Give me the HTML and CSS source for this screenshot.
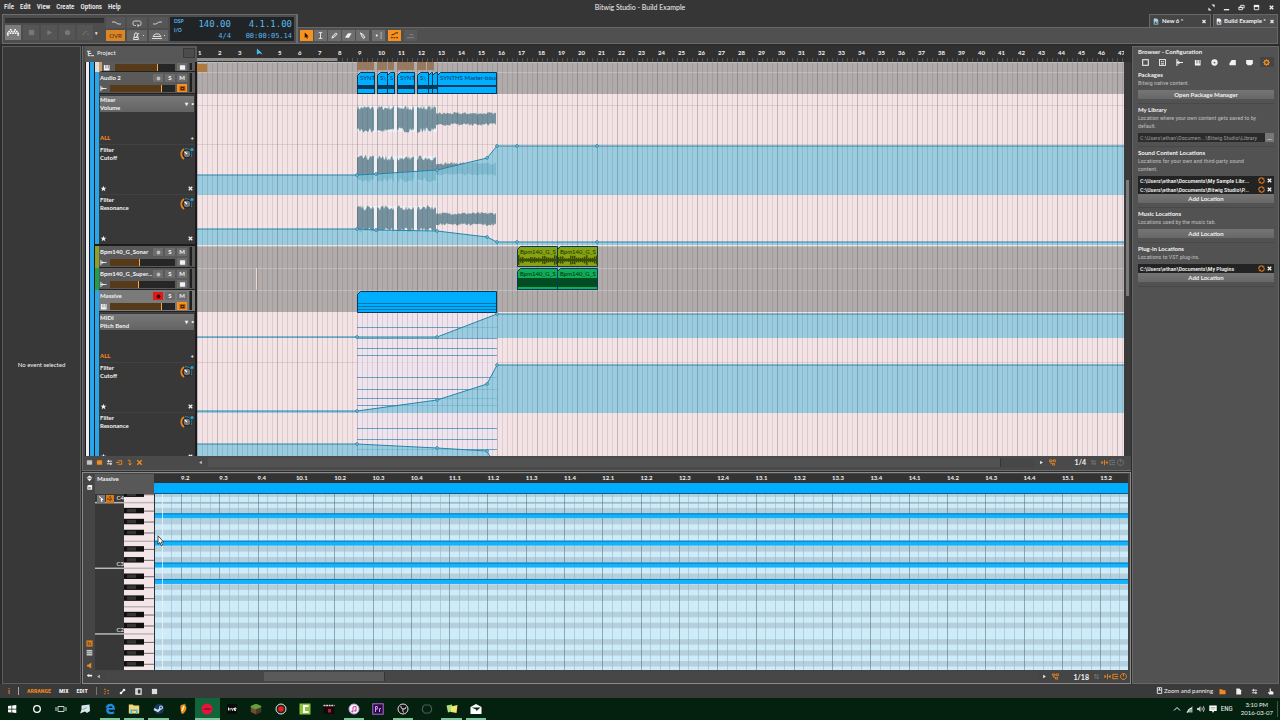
FILE: index.html
```
<!DOCTYPE html>
<html lang="en">
<head>
<meta charset="utf-8">
<title>Bitwig Studio - Build Example</title>
<link rel="stylesheet" href="styles.css">
</head>
<body>
<svg class="defs" aria-hidden="true">
  <symbol id="i-close" viewBox="0 0 8 8"><path d="M2 2l4 4M6 2l-4 4" stroke="currentColor" stroke-width="1.500"/></symbol>
  <symbol id="i-doc" viewBox="0 0 8 8"><path d="M1 0h4l2 2v6H1z" fill="currentColor"/><path d="M2 7V5h1V4h1v2h1V4h1v3z" fill="#444"/></symbol>
  <symbol id="i-audio" viewBox="0 0 8 8"><path d="M1 1v6M2.500 2.500v3M4 3.500v1M1 4h6.500" stroke="currentColor" fill="none"/></symbol>
  <symbol id="i-keys" viewBox="0 0 8 8"><path d="M1 1h1.500v4H3V1h1.200v4h.6V1H6v4h.6V1H7.500v6.500H1z" fill="currentColor"/></symbol>
  <symbol id="i-dot" viewBox="0 0 8 8"><circle cx="4" cy="4" r="2.200" fill="currentColor"/></symbol>
  <symbol id="i-screen" viewBox="0 0 8 8"><rect x="1" y="1.500" width="6" height="5" rx=".5" fill="currentColor"/></symbol>
  <symbol id="i-ring" viewBox="0 0 8 8"><rect x=".7" y="1.200" width="6.600" height="5.600" fill="#b0560c"/><rect x="2.500" y="3" width="3" height="2" fill="#f7921e" stroke="#2a1600"/></symbol>
  <symbol id="i-star" viewBox="0 0 8 8"><path d="M4 .8l.9 2.200 2.400.1-1.900 1.500.7 2.400L4 5.700 1.900 7l.7-2.400L.7 3.100l2.400-.1z" fill="currentColor"/></symbol>
  <symbol id="i-knob" viewBox="0 0 14 14"><path d="M4 12A6 6 0 0 1 4 2" stroke="#e8841c" stroke-width="1.800" fill="none"/><path d="M5 1.700A6 6 0 0 1 11 10" stroke="#2b7fa8" stroke-width="1.200" fill="none"/><circle cx="7" cy="7" r="4" fill="#757575" stroke="#1d1d1d"/><path d="M7 7L4.600 4.600" stroke="#fff" stroke-width="1.200"/><circle cx="12" cy="2.500" r="1.600" fill="#1ea4dc"/></symbol>
  <symbol id="i-refresh" viewBox="0 0 8 8"><path d="M1.300 5A2.800 2.800 0 0 1 6 2M6.700 3A2.800 2.800 0 0 1 2 6" stroke="#e07a24" stroke-width="1.200" fill="none"/><path d="M4.500 2.800H7V.5zM3.500 5.200H1v2.300z" fill="#e07a24"/></symbol>
  <symbol id="i-tree" viewBox="0 0 8 8"><path d="M.5 1h2.500v2H.5zM5 1h2.500v2H5zM3 2h2M2 3v2h2M4 5h2.500v2H4z" stroke="currentColor" stroke-width=".9" fill="none"/></symbol>
  <symbol id="i-snap" viewBox="0 0 8 8"><path d="M4 1v6" stroke="currentColor"/><path d="M.5 2v4L3 4zM7.500 2v4L5 4z" fill="currentColor"/></symbol>
  <symbol id="i-lines" viewBox="0 0 8 8"><path d="M1 1v6M1 1.500h6M3 4h4M1 6.500h6" stroke="currentColor" fill="none"/></symbol>
  <symbol id="i-clock" viewBox="0 0 8 8"><path d="M2.500.8h3L7.200 2.500v3L5.500 7.200h-3L.8 5.500v-3zM4 1v3" stroke="currentColor" fill="none"/></symbol>
  <symbol id="i-swap" viewBox="0 0 8 8"><path d="M1 2.500h6M1 5.500h6M3 1v3M5.500 4v3" stroke="currentColor" fill="none"/></symbol>
  <symbol id="i-left" viewBox="0 0 8 8"><path d="M5.500 2v4L2.500 4z" fill="currentColor"/></symbol>
  <symbol id="i-right" viewBox="0 0 8 8"><path d="M2.500 2v4l3-2z" fill="currentColor"/></symbol>
  <symbol id="i-pointer" viewBox="0 0 8 8"><path d="M2 .5v6.300l1.500-1.500 1 2.400 1-.5-1-2.200h2z" fill="currentColor"/></symbol>
</svg>

<div class="app">
  <header class="top">
    <nav class="menu">
      <button>File</button><button>Edit</button><button>View</button><button>Create</button><button>Options</button><button>Help</button>
    </nav>
    <h1 class="title">Bitwig Studio - Build Example</h1>
    <div class="window-controls">
      <button aria-label="Full screen"><svg class="ic" viewBox="0 0 8 8"><path d="M4 .5h3.500V4zM4 7.500H.5V4z" fill="currentColor"/></svg></button>
      <button aria-label="Minimize"><svg class="ic" viewBox="0 0 8 8"><path d="M1 6.500h6" stroke="currentColor" stroke-width="1.500"/></svg></button>
      <button aria-label="Restore"><svg class="ic" viewBox="0 0 8 8"><path d="M3 3V1.500h4v3H5.500M1 3.500h4v3H1zM1 4h4" stroke="currentColor" fill="none"/></svg></button>
      <button aria-label="Maximize"><svg class="ic" viewBox="0 0 8 8"><path d="M1.500 2v4.500h5V2z" stroke="currentColor" fill="none"/><path d="M1 1h6v2.500H1z" fill="currentColor"/></svg></button>
      <button aria-label="Close"><svg class="ic"><use href="#i-close"/></svg></button>
    </div>
  </header>

  <section class="bar">
    <div class="transport">
      <div class="transport-left">
        <div class="progress"></div>
        <div class="transport-row">
          <button class="logo" aria-label="Dashboard"><svg viewBox="0 0 14 8"><g fill="#fff"><rect x="3.500" y="0" width="2" height="1.700"/><rect x="8.500" y="0" width="2" height="1.700"/><rect x="1.500" y="2" width="2" height="1.700"/><rect x="4.500" y="2" width="2" height="1.700"/><rect x="7.500" y="2" width="2" height="1.700"/><rect x="10.500" y="2" width="2" height="1.700"/><rect x="0" y="4" width="2" height="1.700"/><rect x="3" y="4" width="2" height="1.700"/><rect x="6" y="4" width="2" height="1.700"/><rect x="9" y="4" width="2" height="1.700"/><rect x="12" y="4" width="2" height="1.700"/><rect x="0" y="6" width="2" height="1.700"/><rect x="12" y="6" width="2" height="1.700"/></g></svg></button>
          <button aria-label="Stop"><svg class="ic" viewBox="0 0 8 8"><rect x="1" y="1" width="6" height="6" fill="currentColor"/></svg></button>
          <button aria-label="Play"><svg class="ic" viewBox="0 0 8 8"><path d="M1.500 1v6L7 4z" fill="currentColor"/></svg></button>
          <button aria-label="Record"><svg class="ic" viewBox="0 0 8 8"><circle cx="4" cy="4" r="3" fill="currentColor"/></svg></button>
          <button aria-label="Automation record"><svg class="ic" viewBox="0 0 8 8"><path d="M0 6h2l2-3h2M6 6h2" stroke="currentColor" fill="none"/></svg></button>
          <span class="caret">▾</span>
        </div>
      </div>
      <div class="modes">
        <button class="mode" aria-label="Punch in"><svg class="wide" viewBox="0 0 12 8"><path d="M2 3l3 0 3 2h3" stroke="#ccc" fill="none"/></svg></button>
        <button class="mode" aria-label="Loop"><svg class="wide" viewBox="0 0 12 8"><path d="M5 6.500H3.500a1.500 1.500 0 0 1-1.500-1.500V3.500A1.500 1.500 0 0 1 3.500 2h5A1.500 1.500 0 0 1 10 3.500V5a1.500 1.500 0 0 1-1.500 1.500H7M7 5v3" stroke="#ccc" fill="none"/></svg></button>
        <button class="mode" aria-label="Punch out"><svg class="wide" viewBox="0 0 12 8"><path d="M1 5h3l3-2h3" stroke="#ccc" fill="none"/></svg></button>
        <button class="mode on">OVR</button>
        <button class="mode lit" aria-label="Metronome"><svg class="wide" viewBox="0 0 12 8"><path d="M5 1h2l1.500 6.500h-5zM4 5.500h4M6 5l3-4" stroke="#ddd" fill="none"/></svg><i></i></button>
        <button class="mode lit" aria-label="Groove"><svg class="wide" viewBox="0 0 12 8"><path d="M1 6.500h10M2 4.500h8L8 2H4z" stroke="#ddd" fill="none"/></svg><i></i></button>
      </div>
      <div class="lcd">
        <div class="lcd-flags"><span>DSP</span><span>I/O</span></div>
        <div class="lcd-col"><b>140.00</b><span>4/4</span></div>
        <div class="lcd-col"><b>4.1.1.00</b><span>00:00:05.14</span></div>
      </div>
    </div>
    <div class="bar-right">
      <div class="tabs">
        <div class="tab"><svg class="ic sky"><use href="#i-doc"/></svg><span>New 6 *</span><button aria-label="Close New 6"><svg class="ic"><use href="#i-close"/></svg></button></div>
        <div class="tab active"><svg class="ic"><use href="#i-doc"/></svg><span>Build Example *</span><button aria-label="Close Build Example"><svg class="ic"><use href="#i-close"/></svg></button></div>
      </div>
      <div class="tools">
        <button class="tool on" aria-label="Pointer"><svg class="ic"><use href="#i-pointer"/></svg></button>
        <button class="tool" aria-label="Time selection"><svg class="ic" viewBox="0 0 8 8"><path d="M2 .7h4M2 7.300h4M4 1v6" stroke="currentColor"/></svg></button>
        <button class="tool" aria-label="Pen"><svg class="ic" viewBox="0 0 8 8"><path d="M1 7l1-2.500L5.500 1 7 2.500 3.500 6z" stroke="currentColor" fill="#999"/></svg></button>
        <button class="tool" aria-label="Eraser"><svg class="ic" viewBox="0 0 8 8"><path d="M.5 5.500L3.500 1.500h4L4.500 6.500h-4z" fill="currentColor"/></svg></button>
        <button class="tool" aria-label="Knife"><svg class="ic" viewBox="0 0 8 8"><path d="M1.500 1L5 3l1.500 3-1 1.500-2-2z" fill="#999" stroke="currentColor"/></svg></button>
        <button class="tool spaced" aria-label="Follow playback"><svg class="ic" viewBox="0 0 8 8"><circle cx="2" cy="4" r="1.200" fill="currentColor"/><path d="M7 0v8" stroke="#bbb"/></svg></button>
        <button class="tool spaced on" aria-label="Automation write"><svg class="ic" viewBox="0 0 8 8"><path d="M0 6.500h2M3 6.500h2M6 6.500h2M.5 3.500l3-1 2-1.500H8" stroke="currentColor" fill="none"/></svg></button>
        <button class="tool spaced faint" aria-label="Layered editing"><svg class="ic" viewBox="0 0 8 8"><path d="M0 6.500h8M3 3h4" stroke="currentColor" fill="none"/></svg></button>
      </div>
    </div>
  </section>

  <main class="work">
    <aside class="inspector"><p>No event selected</p></aside>

    <div class="center">
      <section class="arranger">
        <div class="project"><svg class="ic" viewBox="0 0 8 8"><path d="M0 1.500h4M1.500 2v4.500H4M2 4h3M4.500 6.500H8" stroke="#fff" fill="none"/></svg><span>Project</span><span class="grid-box"></span></div>
        <div class="ruler" id="ruler"></div>
        <div class="corner"></div>

        <div class="tracks">
          <div class="strip white"></div><div class="strip blue"></div>
          <div class="track-list">
            <div class="group none">
              <div class="track folded">
                <svg class="ic"><use href="#i-keys"/></svg>
                <input type="range" class="fader" aria-label="Volume" value="71" style="--v:71%">
                <button class="btn" aria-label="Show lanes"><svg class="ic"><use href="#i-screen"/></svg></button><span class="meter"></span>
              </div>
            </div>
            <div class="group blue open">
              <div class="track">
                <span class="name">Audio 2</span>
                <button class="btn" aria-label="Record"><svg class="ic dim"><use href="#i-dot"/></svg></button><button class="btn">S</button><button class="btn">M</button>
                <svg class="ic"><use href="#i-audio"/></svg><input type="range" class="fader" aria-label="Audio 2 volume" value="79" style="--v:79%"><button class="btn hot" aria-label="Automation"><svg class="ic"><use href="#i-ring"/></svg></button><span class="meter"></span>
              </div>
              <div class="lane">
                <button class="picker"><span>Mixer<br>Volume</span><i>▾</i><i>▪</i></button>
                <div class="lane-foot"><b class="all">ALL</b><span>+</span></div>
              </div>
              <div class="lane"><div class="lane-name"><span>Filter<br>Cutoff</span><svg class="knob"><use href="#i-knob"/></svg></div>
                <div class="lane-foot"><svg class="ic"><use href="#i-star"/></svg><svg class="ic"><use href="#i-close"/></svg></div></div>
              <div class="lane"><div class="lane-name"><span>Filter<br>Resonance</span><svg class="knob"><use href="#i-knob"/></svg></div>
                <div class="lane-foot"><svg class="ic"><use href="#i-star"/></svg><svg class="ic"><use href="#i-close"/></svg></div></div>
            </div>
            <div class="group olive">
              <div class="track">
                <span class="name">Bpm140_G_Sonar</span>
                <button class="btn" aria-label="Record"><svg class="ic dim"><use href="#i-dot"/></svg></button><button class="btn">S</button><button class="btn">M</button>
                <svg class="ic"><use href="#i-audio"/></svg><input type="range" class="fader" aria-label="Sonar volume" value="45" style="--v:45%"><button class="btn" aria-label="Automation"><svg class="ic"><use href="#i-screen"/></svg></button><span class="meter"></span>
              </div>
            </div>
            <div class="group green">
              <div class="track">
                <span class="name">Bpm140_G_Super...</span>
                <button class="btn" aria-label="Record"><svg class="ic dim"><use href="#i-dot"/></svg></button><button class="btn">S</button><button class="btn">M</button>
                <svg class="ic"><use href="#i-audio"/></svg><input type="range" class="fader" aria-label="Super volume" value="44" style="--v:44%"><button class="btn" aria-label="Automation"><svg class="ic"><use href="#i-screen"/></svg></button><span class="meter"></span>
              </div>
            </div>
            <div class="group blue">
              <div class="track selected">
                <span class="name">Massive</span>
                <button class="btn armed" aria-label="Record"><svg class="ic"><use href="#i-dot"/></svg></button><button class="btn">S</button><button class="btn">M</button>
                <svg class="ic"><use href="#i-keys"/></svg><input type="range" class="fader" aria-label="Massive volume" value="79" style="--v:79%"><button class="btn hot" aria-label="Automation"><svg class="ic"><use href="#i-ring"/></svg></button><span class="meter"></span>
              </div>
              <div class="lane">
                <button class="picker"><span>MIDI<br>Pitch Bend</span><i>▾</i><i>▪</i></button>
                <div class="lane-foot"><b class="all">ALL</b><span>+</span></div>
              </div>
              <div class="lane"><div class="lane-name"><span>Filter<br>Cutoff</span><svg class="knob"><use href="#i-knob"/></svg></div>
                <div class="lane-foot"><svg class="ic"><use href="#i-star"/></svg><svg class="ic"><use href="#i-close"/></svg></div></div>
              <div class="lane"><div class="lane-name"><span>Filter<br>Resonance</span><svg class="knob"><use href="#i-knob"/></svg></div>
                <div class="lane-foot"><svg class="ic"><use href="#i-star"/></svg><svg class="ic"><use href="#i-close"/></svg></div></div>
            </div>
          </div>
        </div>
        <div class="timeline"><svg id="timeline"></svg></div>
        <div class="vscroll"><div></div></div>

        <div class="foot-tools">
          <button aria-label="Clips"><svg class="ic grey"><use href="#i-screen"/></svg></button>
          <button class="orange" aria-label="Tracks"><svg class="ic"><use href="#i-screen"/></svg></button>
          <button aria-label="I/O"><svg class="ic"><use href="#i-swap"/></svg></button>
          <button class="orange" aria-label="Sends"><svg class="ic" viewBox="0 0 8 8"><path d="M0 4h4M2 2h5M2 6h5M6.500 2v4" stroke="currentColor" fill="none"/></svg></button>
          <button class="orange" aria-label="Effects"><svg class="ic" viewBox="0 0 8 8"><path d="M2 1.500h2.500v5M3 5l1.500 2L6.500 5" stroke="currentColor" fill="none"/></svg></button>
          <button class="orange" aria-label="Deactivated"><svg class="ic" viewBox="0 0 8 8"><path d="M1.500 1.500l5 5M6.500 1.500l-5 5" stroke="currentColor" stroke-width="1.600"/></svg></button>
        </div>
        <div class="hscroll">
          <button aria-label="Scroll left"><svg class="ic grey"><use href="#i-left"/></svg></button>
          <div class="rail"><div class="thumb long"></div></div>
          <button aria-label="Scroll right"><svg class="ic"><use href="#i-right"/></svg></button>
          <svg class="ic orange"><use href="#i-tree"/></svg><span class="snap">1/4</span><svg class="ic faded"><use href="#i-swap"/></svg>
          <span class="trio"><svg class="ic orange"><use href="#i-snap"/></svg><svg class="ic faded"><use href="#i-lines"/></svg><svg class="ic faded"><use href="#i-clock"/></svg></span>
        </div>
      </section>

      <section class="editor">
        <div class="editor-side">
          <svg class="ic" viewBox="0 0 8 8"><path d="M4 .5L7.500 3H.5zM1 4h6L4 7z" fill="currentColor"/></svg>
          <svg class="ic" viewBox="0 0 8 8"><path d="M1.500 2L3 1h4v5.500H1.500z" fill="currentColor"/><path d="M2.500 4.500h3" stroke="#444"/></svg>
          <span class="spring"></span>
          <svg class="ic" viewBox="0 0 8 8"><rect x=".5" y=".5" width="7" height="7" fill="#e8841c"/><path d="M2.500 2v4M4 3.500h2M4 5.500h2" stroke="#333"/></svg>
          <svg class="ic grey" viewBox="0 0 8 8"><rect x=".8" y="1" width="6.400" height="6.500" fill="currentColor"/><path d="M1 3h6M1 5h6" stroke="#888"/></svg>
          <svg class="ic orange tail" viewBox="0 0 8 8"><path d="M1 3h1.500L6 .5v7L2.500 5H1z" fill="currentColor"/></svg>
          <svg class="ic" viewBox="0 0 8 8"><path d="M1 4l2-2v4zM3 3h4v2H3z" fill="currentColor"/></svg>
        </div>
        <div class="editor-name">Massive</div>
        <div class="editor-ruler" id="editorRuler"></div>
        <div class="keys"><svg id="keys"></svg></div>
        <div class="notes"><svg id="notes"></svg>
          <svg class="cursor" viewBox="0 0 8 12"><path d="M1 .8v8.400l1.900-1.700 1.400 3.200 1.400-.6-1.400-3.100h2.400z" fill="#fff" stroke="#222" stroke-width=".8"/></svg>
        </div>
        <div class="hscroll">
          <button aria-label="Scroll left"><svg class="ic grey"><use href="#i-left"/></svg></button>
          <div class="rail"><div class="thumb short"></div></div>
          <button aria-label="Scroll right"><svg class="ic"><use href="#i-right"/></svg></button>
          <svg class="ic orange"><use href="#i-tree"/></svg><span class="snap">1/18</span><svg class="ic faded"><use href="#i-swap"/></svg>
          <span class="trio"><svg class="ic orange"><use href="#i-snap"/></svg><svg class="ic orange"><use href="#i-lines"/></svg><svg class="ic orange"><use href="#i-clock"/></svg></span>
        </div>
      </section>
    </div>

    <aside class="browser">
      <h2>Browser - Configuration</h2>
      <div class="browser-icons">
        <button aria-label="Devices"><svg class="ic" viewBox="0 0 8 8"><rect x=".8" y=".8" width="6.400" height="6.400" fill="none" stroke="currentColor" stroke-width="1.200"/></svg></button>
        <button aria-label="Presets"><svg class="ic" viewBox="0 0 8 8"><rect x=".6" y=".6" width="6.800" height="6.800" fill="none" stroke="currentColor"/><path d="M2.500 2.500h1v1h-1zM4.500 2.500h1v1h-1zM2.500 5h3v1h-3z" fill="currentColor" stroke="currentColor" stroke-width=".4"/></svg></button>
        <button aria-label="Samples"><svg class="ic" viewBox="0 0 8 8"><path d="M1 0v8M2.500 2v4M4 3v2M1 4h7" stroke="currentColor" stroke-width="1.200" fill="none"/></svg></button>
        <button aria-label="Multisamples"><svg class="ic"><use href="#i-keys"/></svg></button>
        <button aria-label="Music"><svg class="ic" viewBox="0 0 8 8"><circle cx="4" cy="4" r="3.600" fill="currentColor"/><circle cx="4" cy="4" r="1" fill="#555"/></svg></button>
        <button aria-label="Clips"><svg class="ic" viewBox="0 0 8 8"><path d="M.5 7V5L3 1h4.800v6z" fill="currentColor"/></svg></button>
        <button aria-label="Files"><svg class="ic" viewBox="0 0 8 8"><path d="M.2 1h7.600V5L6 7H2L.2 5z" fill="currentColor"/></svg></button>
        <button class="orange current" aria-label="Settings"><svg class="ic" viewBox="0 0 8 8"><circle cx="4" cy="4" r="2.300" fill="none" stroke="currentColor" stroke-width="1.500"/><path d="M4 0v1.500M4 6.500V8M0 4h1.500M6.500 4H8M1.200 1.200l1 1M5.800 5.800l1 1M6.800 1.200l-1 1M2.200 5.800l-1 1" stroke="currentColor"/></svg></button>
      </div>
      <section><h3>Packages</h3><p>Bitwig native content.</p><div class="controls"><button class="action">Open Package Manager</button></div></section>
      <section><h3><label for="lib">My Library</label></h3><p>Location where your own content gets saved to by default.</p><div class="controls path-input"><input id="lib" type="text" readonly value="C:\Users\ethan\Documen...\Bitwig Studio\Library"><button aria-label="Choose folder">...</button></div></section>
      <section><h3>Sound Content Locations</h3><p>Locations for your own and third-party sound content.</p><div class="controls">
        <div class="path"><span>C:\Users\ethan\Documents\My Sample Libr...</span><button aria-label="Rescan"><svg class="ic"><use href="#i-refresh"/></svg></button><button aria-label="Remove"><svg class="ic"><use href="#i-close"/></svg></button></div>
        <div class="path"><span>C:\Users\ethan\Documents\Bitwig Studio\P...</span><button aria-label="Rescan"><svg class="ic"><use href="#i-refresh"/></svg></button><button aria-label="Remove"><svg class="ic"><use href="#i-close"/></svg></button></div>
        <button class="action">Add Location</button></div></section>
      <section><h3>Music Locations</h3><p>Locations used by the music tab.</p><div class="controls"><button class="action">Add Location</button></div></section>
      <section><h3>Plug-in Locations</h3><p>Locations to VST plug-ins.</p><div class="controls">
        <div class="path"><span>C:\Users\ethan\Documents\My Plugins</span><button aria-label="Rescan"><svg class="ic"><use href="#i-refresh"/></svg></button><button aria-label="Remove"><svg class="ic"><use href="#i-close"/></svg></button></div>
        <button class="action">Add Location</button></div></section>
    </aside>
  </main>

  <footer class="status">
    <button class="orange info" aria-label="Info">i</button>
    <nav class="views"><button class="orange">ARRANGE</button><button>MIX</button><button>EDIT</button></nav>
    <div class="panels">
      <button class="orange" aria-label="Note editor"><svg class="ic" viewBox="0 0 8 8"><path d="M1 1.500h2M4.500 3h2.500M2 4h1.500M1 6.500h2M5 6h2" stroke="currentColor"/></svg></button>
      <button aria-label="Automation"><svg class="ic" viewBox="0 0 8 8"><path d="M2 6L6 2" stroke="currentColor" stroke-width="1.300" fill="none"/><circle cx="2.300" cy="5.700" r="1.500" fill="currentColor"/><circle cx="5.700" cy="2.300" r="1.500" fill="currentColor"/></svg></button>
      <button aria-label="Devices"><svg class="ic" viewBox="0 0 8 8"><path d="M1 1h6v6H1zM2.500 1v6" stroke="currentColor" stroke-width="1.300" fill="none"/></svg></button>
      <button aria-label="Mixer"><svg class="ic" viewBox="0 0 8 8"><path d="M1 1h6v6H1z" fill="#ddd"/></svg></button>
    </div>
    <span class="hint"><svg class="ic" viewBox="0 0 8 8"><path d="M1.500 .8h5v6.500h-5zM4 1v2.500M1.500 3.500h5" stroke="currentColor" fill="none"/></svg>Zoom and panning</span>
    <div class="drawers">
      <button class="orange" aria-label="Browser"><svg class="ic" viewBox="0 0 8 8"><path d="M.5 1.500h3l1 1h3V7h-7z" fill="currentColor"/></svg></button>
      <button aria-label="Project"><svg class="ic" viewBox="0 0 8 8"><path d="M1.500 .5H5l2 2v5H1.500z" fill="currentColor"/></svg></button>
      <button aria-label="Mappings"><svg class="ic"><use href="#i-swap"/></svg></button>
      <button aria-label="Studio"><svg class="ic" viewBox="0 0 8 8"><path d="M3 .5h1.300V3.500l3 .7V7.500H2.500L.8 4.500 3 5z" fill="currentColor"/></svg></button>
    </div>
  </footer>

  <footer class="taskbar">
    <div class="apps">
      <button aria-label="Start"><svg viewBox="0 0 12 12"><path d="M2 3l3.500-.5v3.200H2zM6.200 2.400L10.300 2v3.700H6.200zM2 6.400h3.500v3.200L2 9.200zM6.200 6.400h4.100V10l-4.100-.4z" fill="#fff"/></svg></button>
      <button aria-label="Cortana"><svg viewBox="0 0 12 12"><circle cx="6" cy="6" r="3.300" fill="none" stroke="#fff" stroke-width="1.300"/></svg></button>
      <button aria-label="Task view"><svg viewBox="0 0 12 12"><path d="M3 3.500h6v5H3zM1 4v4M11 4v4" stroke="#c8d4cc" fill="none"/></svg></button>
      <button aria-label="Notes"><svg viewBox="0 0 12 12"><path d="M2.500 2.500L10.500 1.500 11 8 8 10 6 8.500 1 10.500l1.500-4z" fill="#dbe8ea"/><path d="M3.500 6.500l4.500-2" stroke="#7fa4ad"/></svg></button>
      <button class="run" aria-label="Edge"><svg viewBox="0 0 12 12"><path d="M1.300 5.500C2 2 4 .8 6.300.8 9.500.8 11 3.200 11 6.700H4.500c.2 2.500 3.500 2.800 5.700 1.500v2.200C6 12.600 2 10.800 2.200 7c.1-1.800 1-2.800 2-3.300-.9.300-2.200.8-2.900 1.800zM4.600 5h3.800C8.300 2.800 5 2.800 4.600 5z" fill="#1f8ae0" fill-rule="evenodd"/></svg></button>
      <button class="run" aria-label="Explorer"><svg viewBox="0 0 12 12"><path d="M.8 1.500h4l1 1h5.400v8H.8z" fill="#f6d778"/><path d="M2.500 11V6.500h7V11H8V8H4v3z" fill="#4ab6cf"/></svg></button>
      <button class="run" aria-label="Steam"><svg viewBox="0 0 12 12"><circle cx="6" cy="6" r="5" fill="#173a63"/><path d="M1 6l4 2 3-3" stroke="#cfdded" stroke-width="2" fill="none"/><circle cx="8" cy="4.500" r="2" fill="#cfdded"/><circle cx="8" cy="4.500" r=".9" fill="#173a63"/></svg></button>
      <button aria-label="FL Studio"><svg viewBox="0 0 12 12"><path d="M3.500 5.500Q2.500 1 7 1.500 10.500 3 9 7 7 11 5 11 3.500 9 3.500 5.500z" fill="#f08c1c"/><path d="M7 3L5 8" stroke="#fff2c0" stroke-width="1.500"/><path d="M6 2l1-1.500L9.500 2z" fill="#59a13a"/></svg></button>
      <button class="run active" aria-label="Red app"><svg viewBox="0 0 12 12"><circle cx="6" cy="6" r="5.500" fill="#e4153c"/><path d="M2.500 6.500h1.500V5.500h1V6.500h1V5.500h1v1h1v-1h1v1h1" stroke="#8d0620" fill="none" stroke-width=".8"/></svg></button>
      <button aria-label="Live"><svg viewBox="0 0 12 12"><rect x="1" y="1" width="10" height="10" fill="#0a0a0a"/><path d="M2.500 4.500v3M4 5v2.500M5.500 5L6.500 7.500 7.500 5M8.500 6.200h1.500V5H8.500v2.500H10" stroke="#fff" stroke-width=".9" fill="none"/></svg></button>
      <button aria-label="Minecraft"><svg viewBox="0 0 12 12"><path d="M.8 3L6 .8 11.200 3v6L6 11.500.8 9z" fill="#6f4c33"/><path d="M.8 3L6 .8 11.200 3v1.500L6 6.500.8 4.500z" fill="#5fa13a"/><path d="M6 6v5.500L11.200 9V4z" fill="#000" opacity=".3"/></svg></button>
      <button aria-label="Recorder"><svg viewBox="0 0 12 12"><circle cx="6" cy="6" r="5" fill="#222" stroke="#e6e6e6"/><circle cx="6" cy="6" r="2.800" fill="#e8201c"/></svg></button>
      <button aria-label="Camtasia"><svg viewBox="0 0 12 12"><rect x=".5" y=".5" width="11" height="11" fill="#8cc23c"/><path d="M9.500 3H5v6h4.500" stroke="#fff" stroke-width="2" fill="none"/></svg></button>
      <button aria-label="Game"><svg viewBox="0 0 12 12"><rect x=".5" y="1" width="11" height="10" fill="#160808"/><path d="M.5 2.500h11" stroke="#ddd" stroke-width="1.500" stroke-dasharray="2 .6"/><path d="M5 6h3v3.500H5z" fill="#b3202a"/></svg></button>
      <button class="run" aria-label="iTunes"><svg viewBox="0 0 12 12"><circle cx="6" cy="6" r="5" fill="#f5f3fa" stroke="#c9a2e0"/><path d="M5 8.500V4l3-.7v4.500" stroke="#d83f87" fill="none"/><circle cx="4.300" cy="8.400" r="1" fill="#6a6be0"/><circle cx="7.300" cy="7.800" r="1" fill="#d83f87"/></svg></button>
      <button aria-label="Premiere"><svg viewBox="0 0 12 12"><rect x=".8" y=".8" width="10.400" height="10.400" fill="#2a0b3d" stroke="#b26ae0"/><path d="M3.500 9V3.500h1.800v2.700H3.500M7.500 9V5.500M7.500 6.200L9 5.300" stroke="#d59aff" fill="none"/></svg></button>
      <button class="run" aria-label="OBS"><svg viewBox="0 0 12 12"><circle cx="6" cy="6" r="5" fill="#151515" stroke="#e0e0e0"/><path d="M6 6Q3 5 4 3M6 6q3 .5 3-2M6 6q-1 3 1 3.500" stroke="#ddd" fill="none"/></svg></button>
      <button aria-label="Sync"><svg viewBox="0 0 12 12"><path d="M3 9.500A4.500 4.500 0 0 1 3 2.500M9 2.500A4.500 4.500 0 0 1 9 9.500M3 10h6M3 2h6" stroke="#4c5c52" stroke-width="1.200" fill="none"/></svg></button>
      <button class="run" aria-label="Sticky notes"><svg viewBox="0 0 12 12"><path d="M.5 2.500L6 1.500 7 8 2 9.500z" fill="#a8e07a"/><path d="M5 3.500L11.500 2l-1 8L5 9z" fill="#f4e86a"/></svg></button>
      <button class="run" aria-label="Mail"><svg viewBox="0 0 12 12"><path d="M.5 4L6 1l5.500 3v7H.5z" fill="#fff"/><path d="M1.500 4.500h9L6.500 8 6 6.500z" fill="#0a2b16"/></svg></button>
    </div>
    <div class="tray">
      <svg class="ic" viewBox="0 0 8 8"><path d="M1 5.500L4 2.500l3 3" stroke="#fff" fill="none"/></svg>
      <svg class="ic" viewBox="0 0 8 8"><path d="M1 7.500L7.500 1v6.500z" fill="#8fa69a"/><path d="M2.500 7.500A5 5 0 0 1 7 3" stroke="#fff" fill="none"/></svg>
      <svg class="ic" viewBox="0 0 8 8"><path d="M0 3h1.500L3.500 1v6L1.500 5H0z" fill="#ccc"/><path d="M4.800 2.500q1 1.500 0 3M6.300 1.200q2 2.800 0 5.600" stroke="#ccc" fill="none"/></svg>
      <svg class="ic" viewBox="0 0 8 8"><path d="M.3.500h7.400v5.500H5l-1 2-1-2H.3z" fill="#fff"/><path d="M1.500 2.500h5M1.500 4h5" stroke="#7a857e" stroke-width=".6"/></svg>
      <span class="lang">ENG</span>
      <time>3:10 PM<br>2016-03-07</time>
    </div>
  </footer>
</div>
<script src="app.js"></script>
</body>
</html>
```
FILE: styles.css
```
* { box-sizing: border-box; }
html, body { height: 100%; margin: 0; }
body { background: #363636; color: #f2f2f2; font: 700 6px/8px Lato, "Liberation Sans", sans-serif; overflow: hidden; }
button { appearance: none; border: 0; margin: 0; padding: 0; background: none; color: inherit; font: inherit; display: flex; align-items: center; justify-content: center; }
h1, h2, h3, p { margin: 0; font: inherit; }
i { font-style: normal; }
.defs { position: absolute; width: 0; height: 0; }
.ic { width: 7px; height: 7px; flex: none; display: block; }
.orange { color: #f08a1e; }
.grey { color: #c4c4c4; }
.faded { color: #777; }
.dim { color: #bbb; }
.sky { color: #a8d4ee; }

.app { height: 100%; min-height: 640px; display: grid; grid-template-rows: 14px 30px 1fr 14px 22px; }

/* menu row */
.top { display: grid; grid-template-columns: 1fr auto 1fr; align-items: center; }
.menu { display: flex; gap: 6px; padding-left: 4px; font: 500 7px/8px "Roboto Condensed", Roboto, sans-serif; }
.title { font-size: 7px; font-weight: 400; }
.window-controls { display: flex; justify-content: flex-end; gap: 8px; padding-right: 5px; }

/* transport and tools */
.bar { display: grid; grid-template-columns: 298px 1fr; }
.transport { display: grid; grid-template-columns: 99px 62px 1fr; gap: 2px; margin-left: 2px; padding: 2px; background: #4d4d4d; border: 1px solid #6c6c6c; border-width: 1px 2px 1px 1px; }
.progress { height: 5px; margin: 1px 0 2px; background: #343434; border-top: 1px solid #2a2a2a; }
.transport-row { display: flex; align-items: center; gap: 2px; color: #777; }
.transport-row button { width: 16px; height: 15px; background: #555; }
.transport-row .logo { background: #7c7c7c; }
.logo svg { width: 12px; height: 7px; }
.caret { color: #ddd; font-size: 5px; }
.modes { display: grid; grid-template-columns: 19px 1fr 1fr; grid-template-rows: 1fr 1fr; gap: 2px; }
.mode { background: #565656; color: #aaa; }
.mode i { width: 1px; height: 1px; background: #ddd; margin-left: 1px; }
.mode.lit { background: #646464; }
.mode.on { background: #dc8527; color: #4a2a08; font-weight: 400; }
.wide { width: 12px; height: 8px; }
.lcd { display: flex; justify-content: space-between; padding: 0 2px 0 4px; background: #202427; color: #58b8ee; font-family: "DejaVu Sans Mono", monospace; font-weight: 400; }
.lcd-flags { display: flex; flex-direction: column; gap: 1px; font: 700 5px/8px Lato, sans-serif; }
.lcd-col { display: flex; flex-direction: column; align-items: flex-end; justify-content: space-evenly; font-size: 7px; }
.lcd-col b { font: 400 9px/12px "DejaVu Sans Mono", monospace; }
.bar-right { display: flex; flex-direction: column; padding-right: 2px; }
.tabs { height: 13px; display: flex; justify-content: flex-end; gap: 2px; }
.tab { width: 62px; display: flex; align-items: center; gap: 3px; padding: 0 3px; background: #454545; border: 1px solid #686868; border-bottom: 0; }
.tab.active { width: 65px; gap: 2px; padding: 0 2px; background: #505050; white-space: nowrap; }
.tab button { margin-left: auto; }
.tab .ic { width: 6px; height: 7px; }
.tools { flex: 1; display: flex; align-items: center; gap: 1px; padding-left: 2px; background: #505050; border: 1px solid #686868; border-left: 0; }
.tool { width: 13px; height: 11px; background: #6e6e6e; color: #f2f2f2; }
.tool.spaced { margin-left: 2px; }
.tool.on { background: #f7921e; color: #241300; }
.tool.faint { background: #5a5a5a; color: #888; }

/* main area */
.work { display: grid; grid-template-columns: 79px 1fr 147px; gap: 1px; padding: 2px 1px 0 2px; min-height: 0; background: #2c2c2c; }
.inspector { display: flex; align-items: center; justify-content: center; background: #383838; border: 1px solid #5c5c5c; }
.inspector p { font-weight: 400; }
.center { display: grid; grid-template-rows: 425px minmax(0, 1fr); gap: 1px; min-height: 0; min-width: 0; }

.arranger { display: grid; grid-template-columns: 112px minmax(0, 1fr) 7px; grid-template-rows: 16px minmax(0, 1fr) 12px; min-height: 0; padding: 0 0 2px 2px; background: #4a4a4a; border: 1px solid #6a6a6a; border-width: 0 0 1px 1px; }
.project { display: flex; align-items: center; gap: 3px; padding: 0 2px 2px 2px; background: #575757; font-weight: 400; }
.grid-box { width: 12px; height: 10px; margin-left: auto; background: #4c4c4c; border: 1px solid #3a3a3a; }
.ruler, .editor-ruler { position: relative; overflow: hidden; }
.ruler { background: repeating-linear-gradient(90deg, #555 0 1px, transparent 1px 5px) 0 100% / 100% 4px no-repeat, #303030; }
.ruler::after { content: ""; position: absolute; left: 0; bottom: 1px; width: 140px; height: 3px; background: #8e8e8e; }
.tick { position: absolute; top: 3px; }
.ruler svg { position: absolute; top: 2px; width: 7px; height: 7px; color: #48b9f2; }
.corner { background: #303030; }

.tracks { display: grid; grid-template-columns: 3px 4px minmax(0, 1fr); gap: 1px; padding-left: 1px; overflow: hidden; min-height: 0; background: #1c1c1c; }
.strip.white { background: #ececf4; }
.strip.blue { background: #28a6ea; }
.track-list { min-height: 0; overflow: hidden; }
.group { border-left: 4px solid #28a6ea; }
.group.open { margin-bottom: 2px; }
.group.none { border-color: #ddd; }
.group.olive { border-color: #8aa22c; }
.group.green { border-color: #1da04c; }
.track { display: grid; grid-template-columns: 8px 41px 10px 10px 10px 4px; grid-template-rows: 10px 10px; column-gap: 2px; align-items: center; height: 22px; margin-right: 2px; padding: 1px 0 0 1px; background: #5a5a5a; border-bottom: 1px solid #222; }
.track.selected { background: #7a7a7a; }
.track.folded { grid-template-columns: 10px 60px 10px 4px; grid-template-rows: 8px; height: 10px; border-left: 3px solid #c9a06a; }
.name { grid-column: 1 / 3; white-space: nowrap; }
.btn { height: 8px; background: #6c6c6c; width: 10px; }
.btn.hot { background: #f7921e; }
.btn.armed { background: #e01818; color: #3a0000; }
.track .fader { grid-column: 2 / 5; }
.track.folded .fader { grid-column: 2; }
.fader { appearance: none; width: 100%; height: 7px; margin: 0; background: linear-gradient(90deg, #573a1a var(--v), #262626 var(--v)); }
.fader::-webkit-slider-thumb { appearance: none; width: 1px; height: 7px; background: #f7a845; }
.meter { grid-row: 1 / 3; grid-column: 6; align-self: stretch; width: 3px; margin-bottom: 1px; background: #1f1f1f; border-left: 1px solid #444; }
.track:not(.folded) .btn:nth-of-type(1) { grid-column: 3; }
.track:not(.folded) .btn:nth-of-type(2) { grid-column: 4; }
.track:not(.folded) .btn:nth-of-type(3) { grid-column: 5; }
.track.folded .meter { grid-row: 1; grid-column: 4; }
.lane { display: flex; flex-direction: column; justify-content: space-between; height: 50px; margin-right: 2px; padding: 1px; background: #383838; border-top: 1px solid #414141; }
.picker { justify-content: flex-start; gap: 3px; width: 100%; background: linear-gradient(#787878, #636363); text-align: left; }
.picker span { flex: 1; }
.lane-name { display: flex; justify-content: space-between; align-items: center; }
.knob { width: 14px; height: 14px; }
.lane-foot { display: flex; justify-content: space-between; align-items: center; height: 8px; margin-bottom: 1px; }
.all { color: #f08a1e; }
.timeline { overflow: hidden; background: #f3e3e5; min-height: 0; }
.timeline > svg, .keys > svg, .notes > svg:first-child { display: block; width: 100%; height: 100%; }
.vscroll { padding: 118px 2px 160px; background: #3a3a3a; }
.vscroll div { height: 100%; background: #7a7a7a; }

.foot-tools { display: flex; align-items: center; gap: 3px; padding-left: 1px; }
.foot-tools button { width: 7px; }
.hscroll { grid-column: 2 / 4; display: flex; align-items: center; gap: 4px; padding-right: 7px; min-width: 0; }
.rail { flex: 1; height: 9px; background: #474747; display: flex; }
.thumb { background: #525252; border-right: 1px solid #363636; }
.thumb.long { width: 96%; }
.thumb.short { width: 13%; margin-left: 17%; background: #5a5a5a; }
.snap { width: 26px; text-align: right; font-size: 7px; }
.trio { display: flex; gap: 1px; }

/* note editor */
.editor { display: grid; grid-template-columns: 12px 59px minmax(0, 1fr) 2px; grid-template-rows: 20px minmax(0, 1fr) 13px; min-height: 0; padding-top: 1px; background: #454545; border: 1px solid #8a8a8a; }
.editor-side { grid-row: 1 / 4; display: flex; flex-direction: column; align-items: center; gap: 2px; padding: 1px 0 4px; }
.spring { flex: 1; }
.tail { margin: 4px 0 1px; }
.editor-name { padding: 1px 2px; background: #585858; }
.editor-ruler { grid-column: 3; background: linear-gradient(#333 0 9px, #00aeff 9px 19px, #0b5c86 19px); }
.editor-ruler .tick { top: 0; font-weight: 700; }
.keys { grid-column: 2; grid-row: 2; background: #383838; overflow: hidden; }
.notes { grid-column: 3; grid-row: 2; position: relative; overflow: hidden; background: #cdebf8; border-left: 1px solid #234; }
.cursor { position: absolute; left: 2px; top: 41px; width: 8px; height: 12px; }
.editor .hscroll { grid-column: 2 / 5; grid-row: 3; padding-right: 3px; }

/* browser */
.browser { padding: 1px 4px 0 5px; background: #525252; border: 1px solid #666; }
.browser-icons { display: flex; justify-content: space-between; margin: 1px 0 2px; }
.browser-icons button { width: 14px; height: 10px; }
.browser-icons .current { background: #454545; }
.browser section { padding: 2px 0 4px; border-bottom: 1px solid #484848; }
.browser p { padding-right: 14px; font: 400 6px/8px "Roboto Condensed", Roboto, sans-serif; color: #bdbdbd; }
.controls { margin-top: 3px; }
.action { width: 100%; height: 9px; background: linear-gradient(#757575, #676767); }
.path { display: flex; align-items: center; gap: 1px; height: 9px; padding: 0 1px 0 2px; background: #232323; font: 500 6px/9px "Roboto Condensed", Roboto, sans-serif; }
.path span { flex: 1; white-space: nowrap; }
.path-input { display: flex; height: 9px; }
.path-input input { flex: 1; min-width: 0; border: 0; padding: 0 2px; background: #2b2b2b; color: #9a9a9a; font: 400 6px/9px "Roboto Condensed", Roboto, sans-serif; }
.path-input button { width: 9px; background: #777; }

/* status */
.status { display: flex; align-items: center; background: #3a3a3a; }
.info { width: 18px; font-size: 7px; }
.views { display: flex; gap: 8px; padding: 0 8px; border-left: 1px solid #aaa; border-right: 1px solid #777; font: 700 6px/8px "Roboto Condensed", Roboto, sans-serif; }
.panels { display: flex; gap: 9px; padding-left: 6px; }
.hint { display: flex; gap: 1px; margin-left: auto; font-weight: 400; }
.drawers { display: flex; gap: 9px; padding: 0 6px; }

/* taskbar */
.taskbar { display: flex; justify-content: space-between; background: #04200f; }
.apps { display: flex; width: 488px; }
.apps button { flex: 1; position: relative; }
.apps svg { width: 12px; height: 12px; }
.apps .run::after { content: ""; position: absolute; left: 2px; right: 2px; bottom: 0; height: 2px; background: #79c79a; }
.apps .active { background: #12643a; }
.apps .active::after { left: 0; right: 0; }
.tray { display: flex; align-items: center; gap: 4px; padding-right: 2px; font-weight: 400; }
.tray .ic { width: 8px; height: 8px; }
.lang { font: 400 7px/8px "Roboto Condensed", Roboto, sans-serif; }
.tray time { padding: 0 4px; border-right: 1px solid #46584c; text-align: center; }
```
FILE: app.js
```
const NS = 'http://www.w3.org/2000/svg';
const BAR = 20;          // pixels per bar in the arranger
const FAR = 4000;        // right end of anything that runs on past the window
const bar = n => (n - 1) * BAR;

function add(parent, tag, attrs, text) {
  const el = document.createElementNS(NS, tag);
  for (const k in attrs) el.setAttribute(k, attrs[k]);
  if (text) el.textContent = text;
  parent.append(el);
  return el;
}

function tick(parent, label, x) {
  const el = document.createElement('span');
  el.className = 'tick';
  el.style.left = x + 'px';
  el.textContent = label;
  parent.append(el);
}

/* ---- arranger ruler ---- */
const ruler = document.getElementById('ruler');
for (let n = 1; n <= 47; n++) if (n !== 4) tick(ruler, n, bar(n) + 1);
const head = add(ruler, 'svg', { viewBox: '0 0 8 8', style: `left:${bar(4) - 1}px` });
add(head, 'path', { d: 'M1 .5v7L4 6l3.500 1.500L5.500 4.500z', fill: 'currentColor' });

/* ---- arranger canvas ---- */
const tl = document.getElementById('timeline');
const defs = add(tl, 'defs', {});
const pat = add(defs, 'pattern', { id: 'bars', width: BAR, height: 10, patternUnits: 'userSpaceOnUse' });
for (const [x, o] of [[0, .26], [5, .12], [10, .14], [15, .12]])
  add(pat, 'rect', { x, y: 0, width: 1, height: 10, fill: '#3a3038', opacity: o });

const rect = (x, y, w, h, fill, more) => add(tl, 'rect', { x, y, width: w, height: h, fill, ...more });
const grey = [[0, 10], [10, 22], [184, 22], [206, 22], [228, 22]];
for (const [y, h] of grey) {
  rect(0, y, FAR, h, '#b1acab');
  rect(0, y, FAR, 1, '#c4c0c0');
}
for (const y of [43, 82, 132, 300]) rect(0, y, FAR, 1, '#d9cdd0');

/* notes drawn behind the lanes of the instrument track */
rect(bar(9), 251, 140, 145, '#ede4f1', { opacity: .6 });
for (const y of [265, 276, 286, 293, 315, 327, 336, 343, 366, 377, 387])
  rect(bar(9), y, 140, 1, '#3f8fb0', { opacity: .75 });

/* audio behind the lanes */
let seed = 7;
const rnd = () => (seed = (seed * 16807) % 2147483647) / 2147483647;
function wave(x0, x1, cy, amp) {
  let d = `M${x0} ${cy}`;
  for (let x = x0; x <= x1; x++) d += `L${x} ${(cy - amp * (.7 + rnd() * .45)).toFixed(1)}`;
  for (let x = x1; x >= x0; x--) d += `L${x} ${(cy + amp * (.7 + rnd() * .45)).toFixed(1)}`;
  add(tl, 'path', { d: d + 'z', fill: '#76929f' });
}
for (const cy of [57, 107, 157]) {
  rect(160, cy - 13, 80, 26, '#eef4f8', { opacity: .8 });
  for (const [a, b] of [[160, 177], [180, 197], [200, 217], [220, 239]]) wave(a, b, cy, 12);
  wave(239, 299, cy, 6);
}

/* automation */
const curves = [
  { base: 133, pts: [[0, 113], [160, 113], [179, 112], [240, 108], [290, 96], [300, 84], [320, 84], [400, 84], [FAR, 84]] },
  { base: 183, pts: [[0, 167], [160, 167], [179, 168], [240, 169], [290, 175], [300, 180], [320, 180], [400, 180], [FAR, 180]] },
  { base: 276, pts: [[0, 275], [160, 275], [240, 275], [300, 252], [FAR, 252]] },
  { base: 351, pts: [[0, 349], [160, 349], [240, 338], [290, 322], [300, 303], [FAR, 303]] },
  { base: 400, pts: [[0, 382], [160, 382], [240, 386], [290, 389], [296, 400]] }
];
for (const c of curves) {
  const line = c.pts.map(p => p.join(' ')).join('L');
  const last = c.pts[c.pts.length - 1][0];
  add(tl, 'path', { d: `M0 ${c.base}L${line}L${last} ${c.base}z`, fill: '#80c5de', opacity: .78 });
  add(tl, 'path', { d: 'M' + line, fill: 'none', stroke: '#2687ad' });
}
rect(0, 0, FAR, 400, 'url(#bars)');
for (const c of curves)
  for (const [x, y] of c.pts.slice(1)) add(tl, 'circle', { cx: x, cy: y, r: 1.3, fill: '#bfe4f2', stroke: '#1f7fa6' });

/* clips */
function clip(x, y, w, h, fill, label, ink) {
  const s = add(tl, 'svg', { x, y, width: w, height: h });
  add(s, 'path', { d: `M.5 ${h - .5}V3.500L3.500 .5H${w - .5}V${h - .5}z`, fill, stroke: '#063a5a' });
  if (label) add(s, 'text', { x: 3, y: 8, 'font-size': 6, fill: ink, 'font-weight': 400 }, label);
  return s;
}
rect(0, 2, 10, 8, '#b07a3e');
for (const [x, w] of [[160, 17], [180, 10], [191, 6], [200, 17], [220, 9], [230, 7]]) rect(x, 0, w, 8, '#97795f');

for (const [x, w, t] of [[160, 18, 'SYNT'], [180, 11, 'S\\'], [190, 8, 'S'], [200, 18, 'SYNT'], [220, 12, 'S\\'], [231, 5, ''], [235, 6, ''], [240, 60, 'SYNTHS Master-boun']]) {
  const s = clip(x, 10, w, 22, '#00aeff', t, '#003a5e');
  add(s, 'rect', { x: 1, y: 13, width: w - 2, height: w > 50 ? 2 : 4, fill: '#01395a' });
  add(s, 'rect', { x: 0, y: 21, width: w, height: 1, fill: '#05304a' });
}
for (const x of [320, 360]) {
  const a = clip(x, 184, 41, 21, '#86a313', 'Bpm140_G_S', '#222c00');
  for (let i = 1; i < 40; i += 2) {
    const h = i % 12 < 7 ? 5 + rnd() * 5 : 3 + rnd() * 2;
    add(a, 'rect', { x: i, y: 14 - h / 2, width: 1.5, height: h, fill: '#3d4d06' });
  }
  add(a, 'rect', { x: 1, y: 13, width: 39, height: 2, fill: '#3d4d06' });
  const b = clip(x, 206, 41, 22, '#0fae57', 'Bpm140_G_S', '#012c12');
  add(b, 'rect', { x: 1, y: 10, width: 39, height: 9, fill: '#024d24' });
}
const midi = clip(160, 229, 140, 22, '#00aeff');
for (const y of [12, 15, 18]) add(midi, 'rect', { x: 1, y, width: 138, height: 1, fill: '#0672a8' });
rect(59, 206, 1, 22, '#ead9cc');

/* ---- note editor ---- */
const SEMI = 5.47, TOP_C = 8.4;    // row height, bottom edge of C4
const black = [1, 3, 6, 8, 10];
const beat = i => 26 + i * 38.3;
const er = document.getElementById('editorRuler');
for (let i = 0; i < 25; i++) {
  const q = i + 1;
  tick(er, `${9 + Math.floor(q / 4)}.${q % 4 + 1}`, beat(i) + 1);
}

const notes = document.getElementById('notes');
const keys = document.getElementById('keys');
add(keys, 'rect', { x: 29, y: 0, width: 30, height: 600, fill: '#f4e6e8' });
for (let oct = -1; oct < 6; oct++) {
  const c = TOP_C + oct * 12 * SEMI;
  for (const n of black) {
    const y = c - (n + 1) * SEMI;
    add(notes, 'rect', { x: 0, y, width: '100%', height: SEMI, fill: '#b5cfdd' });
    add(keys, 'rect', { x: 49, y: y + SEMI / 2, width: 10, height: 1, fill: '#77696c' });
    add(keys, 'rect', { x: 29, y, width: 20, height: SEMI, fill: '#101010' });
    add(keys, 'rect', { x: 32, y: y + 1, width: 9, height: SEMI - 2, fill: '#353535' });
  }
  add(keys, 'rect', { x: 29, y: c - 5 * SEMI, width: 30, height: 1, fill: '#a89b9e' });
  add(keys, 'rect', { x: 0, y: c - .5, width: 59, height: 1.5, fill: '#b8b8b8' });
  if (oct >= 0 && oct < 3) add(keys, 'text', { x: 29, y: c - 2, 'font-size': 6, 'font-weight': 400, fill: '#fff', 'text-anchor': 'end' }, 'C' + (4 - oct));
}
add(keys, 'rect', { x: 2, y: 1, width: 8, height: 8, fill: '#777' });
add(keys, 'path', { d: 'M4 2.500l4 3-2 0 1 2.500', stroke: '#fff', fill: 'none' });
add(keys, 'rect', { x: 11, y: 1, width: 8, height: 8, fill: '#d67a1c' });
add(keys, 'path', { d: 'M15 2v6M12 5h6', stroke: '#5c3206', 'stroke-dasharray': '2 1' });
add(notes, 'rect', { x: 0, y: TOP_C, width: '100%', height: 1, fill: '#7d97a5' });

for (let i = -1; i < 90; i++) {
  const x = beat(i);
  add(notes, 'rect', { x: Math.round(x), y: 0, width: 1, height: 600, fill: '#53707f', opacity: .55 });
  for (let k = 1; k < 4; k++)
    add(notes, 'rect', { x: Math.round(x + k * 9.575), y: 0, width: 1, height: 600, fill: '#8fb2c3', opacity: .5 });
}
for (const semi of [-3, -8, -12, -15]) {
  const y = TOP_C - (semi + 1) * SEMI;
  add(notes, 'rect', { x: 0, y, width: '100%', height: SEMI - .5, fill: '#14b2fb' });
  add(notes, 'rect', { x: 0, y, width: '100%', height: 1, fill: '#0a79b4' });
}
add(notes, 'rect', { x: 7, y: 0, width: 1, height: 600, fill: '#fff', opacity: .7 });
```
